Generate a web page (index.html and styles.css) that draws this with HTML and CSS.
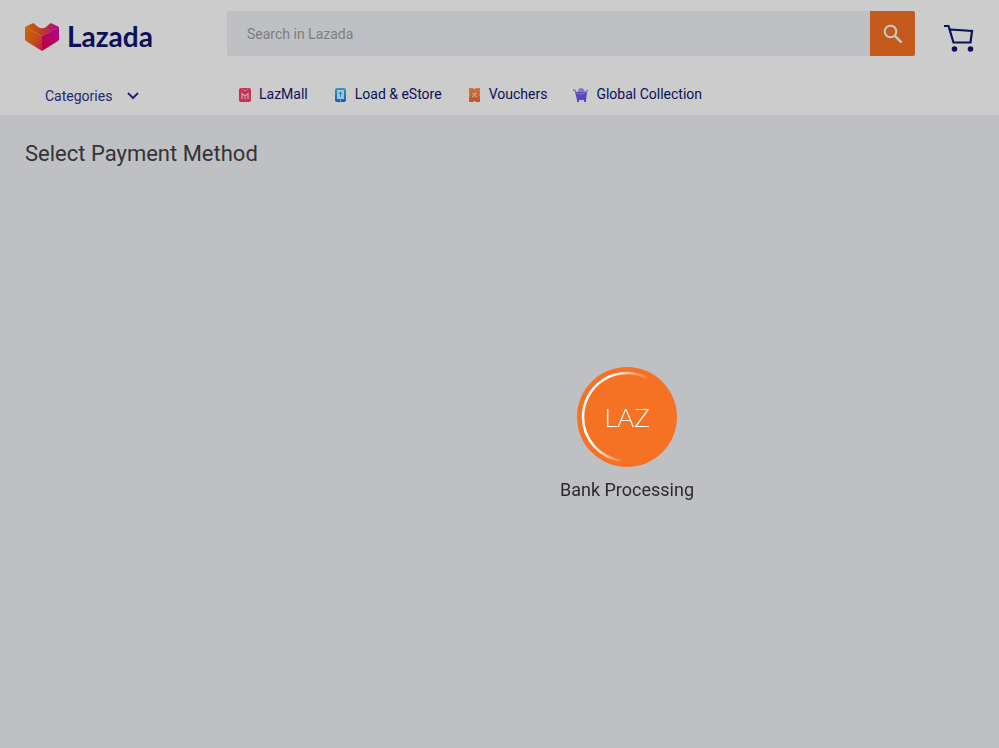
FILE: index.html
```html
<!DOCTYPE html>
<html lang="en">
<head>
    <meta charset="UTF-8">
    <meta name="viewport" content="width=device-width, initial-scale=1.0">
    <title>Lazada - Select Payment Method</title>
    <link rel="stylesheet" href="styles.css">
</head>
<body>
    <header class="header">
        <div class="top-bar">
            <a class="logo" href="#">
                <svg width="34" height="28" viewBox="0 0 34 28" aria-hidden="true">
                    <defs>
                        <linearGradient id="heart-left" x1="0" y1="0" x2="1" y2="1">
                            <stop offset="0" stop-color="#f58200"/>
                            <stop offset="0.5" stop-color="#f26a1c"/>
                            <stop offset="1" stop-color="#f0205a"/>
                        </linearGradient>
                        <linearGradient id="heart-right" x1="1" y1="0" x2="0" y2="1">
                            <stop offset="0" stop-color="#e000b8"/>
                            <stop offset="1" stop-color="#e80a3c"/>
                        </linearGradient>
                        <linearGradient id="heart-top" x1="0" y1="0" x2="1" y2="0">
                            <stop offset="0" stop-color="#f58200"/>
                            <stop offset="0.5" stop-color="#f04a2c"/>
                            <stop offset="1" stop-color="#e000c8"/>
                        </linearGradient>
                    </defs>
                    <path d="M0 4 L7 0.500 Q8 0 9 0.600 L13 4 Q17 6.500 21 4 L25 0.600 Q26 0 27 0.500 L34 4 L17 13 Z" fill="url(#heart-top)"/>
                    <path d="M0 4 L17 13 V28 L1 18 Q0 17 0 16 Z" fill="url(#heart-left)"/>
                    <path d="M34 4 L17 13 V28 L33 18 Q34 17 34 16 Z" fill="url(#heart-right)"/>
                </svg>
                <span>Lazada</span>
            </a>
            <form class="search">
                <input type="search" class="search-input" placeholder="Search in Lazada" aria-label="Search in Lazada">
                <button type="submit" class="search-button" aria-label="Search">
                    <svg width="20" height="20" viewBox="0 0 20 20" fill="none" stroke="#fff" stroke-width="2">
                        <circle cx="7.5" cy="7.5" r="5.8"/>
                        <path d="M12 12 L18.500 18.500" stroke-width="2.400"/>
                    </svg>
                </button>
            </form>
            <a class="cart" href="#" aria-label="Cart">
                <svg width="30" height="28" viewBox="0 0 30 28" fill="none" stroke="#10156f" stroke-width="2.200">
                    <path d="M0 2 H4.500 L9.500 18.500 H26.500 L28 7 L6.500 5.500"/>
                    <circle cx="10.500" cy="25" r="2.800" fill="#10156f" stroke="none"/>
                    <circle cx="26.500" cy="25" r="2.800" fill="#10156f" stroke="none"/>
                </svg>
            </a>
        </div>
        <nav class="nav-bar">
            <button type="button" class="categories">
                Categories
                <svg width="12" height="8" viewBox="0 0 12 8" fill="none" stroke="#2e3192" stroke-width="2">
                    <path d="M1 1 L6 6 L11 1"/>
                </svg>
            </button>
            <div class="channels">
                <a href="#">
                    <svg width="14" height="16" viewBox="0 0 14 16" aria-hidden="true">
                        <rect x="1" y="1" width="12" height="14" rx="2" fill="#fa3c6c"/>
                        <path d="M4 1.500 Q7 6 10 1.500" fill="none" stroke="#ff9ab4"/>
                        <path d="M4 12 V6.500 L7 9 L10 6.500 V12 M7 9 V12" fill="none" stroke="#ffd5df" stroke-width="1.200"/>
                    </svg>
                    LazMall
                </a>
                <a href="#">
                    <svg width="14" height="16" viewBox="0 0 14 16" aria-hidden="true">
                        <defs>
                            <linearGradient id="phone" x1="0" y1="0" x2="0" y2="1">
                                <stop offset="0" stop-color="#46bdf2"/>
                                <stop offset="1" stop-color="#0878ee"/>
                            </linearGradient>
                        </defs>
                        <rect x="1" y="1" width="11" height="14" rx="2" fill="url(#phone)"/>
                        <rect x="3" y="3" width="7" height="9" fill="#d5f2ff"/>
                        <path d="M6.500 10 V5 M5 7 L6.500 5 L8 7" fill="none" stroke="#35a5ec"/>
                        <circle cx="6.500" cy="13.500" r="0.700" fill="#fff"/>
                    </svg>
                    Load &amp; eStore
                </a>
                <a href="#">
                    <svg width="14" height="16" viewBox="0 0 14 16" aria-hidden="true">
                        <defs>
                            <linearGradient id="voucher" x1="0" y1="0" x2="0" y2="1">
                                <stop offset="0" stop-color="#ff9548"/>
                                <stop offset="1" stop-color="#fa6340"/>
                            </linearGradient>
                        </defs>
                        <path d="M1 1 H5 Q6.500 3 8 1 H12 V6 Q11 8 12 10 V15 H8 Q6.500 13 5 15 H1 V10 Q2 8 1 6 Z" fill="url(#voucher)"/>
                        <path d="M4.500 10 L8.500 6 M4.500 6.500 H6 M7.500 9.500 H9" fill="none" stroke="#ffe0c8" stroke-width="1.200"/>
                    </svg>
                    Vouchers
                </a>
                <a href="#">
                    <svg width="16" height="16" viewBox="0 0 16 16" aria-hidden="true">
                        <path d="M5 5 Q5 1 8 1 Q11 1 12 5 Z" fill="#aa96ff"/>
                        <path d="M2 5 H14 L13 13 H4 Z" fill="#7557ee"/>
                        <path d="M0 3 Q3 3 3 6 Q9 9 15 3" fill="none" stroke="#9c88f8" stroke-width="1.300"/>
                        <path d="M5 12 V15 M12 12 V15" stroke="#7557ee" stroke-width="2"/>
                    </svg>
                    Global Collection
                </a>
            </div>
        </nav>
    </header>

    <main class="content">
        <h1>Select Payment Method</h1>
    </main>

    <div class="mask"></div>

    <!-- Loading indicator -->
    <div class="loading" role="status">
        <svg width="100" height="100" viewBox="0 0 100 100" aria-hidden="true">
            <defs>
                <linearGradient id="ring-top" gradientUnits="userSpaceOnUse" x1="35" y1="0" x2="72" y2="0">
                    <stop offset="0" stop-color="#fff"/>
                    <stop offset="1" stop-color="#fff" stop-opacity="0"/>
                </linearGradient>
                <linearGradient id="ring-bottom" gradientUnits="userSpaceOnUse" x1="15" y1="0" x2="46" y2="0">
                    <stop offset="0" stop-color="#fff"/>
                    <stop offset="1" stop-color="#fff" stop-opacity="0"/>
                </linearGradient>
            </defs>
            <circle cx="50" cy="50" r="50" fill="#f57224"/>
            <path d="M6 50 A44 44 0 0 1 70 10.800" fill="none" stroke="url(#ring-top)" stroke-width="2.500"/>
            <path d="M6 50 A44 44 0 0 0 46 93.800" fill="none" stroke="url(#ring-bottom)" stroke-width="2.500"/>
            <text class="loading-logo" x="50" y="60" text-anchor="middle">LAZ</text>
        </svg>
        <p>Bank Processing</p>
    </div>
</body>
</html>
```

FILE: styles.css
```css
* {
    box-sizing: border-box;
}
body {
    margin: 0;
    min-height: 100vh;
    background: #eff0f5;
    font-family: Roboto, "Liberation Sans", sans-serif;
    font-size: 14px;
    color: #424242;
}
a {
    color: #10156f;
    text-decoration: none;
}
button {
    border: none;
    padding: 0;
    font-family: inherit;
    cursor: pointer;
}
svg {
    display: block;
    flex-shrink: 0;
}
.header {
    background: #fff;
    padding: 11px 25px 7px;
}
.top-bar {
    display: flex;
    align-items: center;
}
.logo {
    display: flex;
    align-items: center;
    gap: 8px;
    width: 202px;
    padding-top: 7px;
    font-family: Lato, sans-serif;
    font-size: 28px;
    font-weight: 700;
    line-height: 28px;
}
.logo span {
    padding-bottom: 2px;
}
.search {
    display: flex;
    flex: 1;
    height: 45px;
}
.search-input {
    flex: 1;
    min-width: 0;
    border: none;
    border-radius: 2px 0 0 2px;
    padding: 0 20px;
    background: #eff0f5;
    font-family: inherit;
    font-size: 14px;
}
.search-input::placeholder {
    color: #9e9e9e;
}
.search-button {
    display: flex;
    align-items: center;
    justify-content: center;
    width: 45px;
    background: #f57224;
    border-radius: 0 2px 2px 0;
}
.cart {
    margin-left: 29px;
    padding-top: 8px;
}
.nav-bar {
    display: flex;
    align-items: center;
    padding-top: 24px;
}
.categories {
    display: flex;
    align-items: center;
    gap: 15px;
    width: 213px;
    padding: 4px 0 0 20px;
    background: none;
    color: #2e3192;
    font-size: 14px;
    line-height: 24px;
}
.channels {
    display: flex;
    gap: 26px;
}
.channels a {
    display: flex;
    align-items: center;
    gap: 7px;
    line-height: 24px;
}
.channels svg {
    margin-top: 2px;
}
.content {
    padding: 24px 25px;
}
h1 {
    margin: 0;
    font-size: 22px;
    font-weight: 400;
    line-height: 30px;
}
.mask {
    position: fixed;
    inset: 0;
    background: rgba(0, 0, 0, 0.2);
}
.loading {
    position: fixed;
    inset: 0;
    display: flex;
    flex-direction: column;
    align-items: center;
    justify-content: center;
    gap: 12px;
    padding: 120px 0 0 255px;
}
.loading p {
    margin: 0;
    font-size: 18px;
    line-height: 22px;
    color: #2b2b2d;
}
.loading-logo {
    font-family: Lato, sans-serif;
    font-size: 26px;
    font-weight: 300;
    fill: #fff;
}
```
